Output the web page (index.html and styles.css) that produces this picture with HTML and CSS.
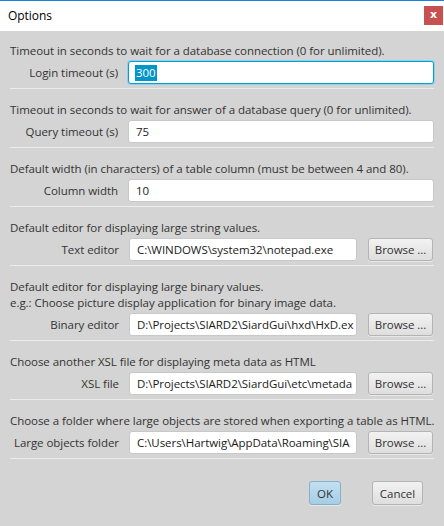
FILE: index.html
```html
<!DOCTYPE html>
<html>
<head>
<meta charset="utf-8">
<title>Options</title>
<link rel="stylesheet" href="styles.css">
</head>
<body>
<div class="window">
  <div class="titlebar">
    <span class="title">Options</span>
    <span class="close">x</span>
  </div>
  <div class="content">
    <section class="group first">
      <p class="desc">Timeout in seconds to wait for a database connection (0 for unlimited).</p>
      <div class="row">
        <span class="label">Login timeout (s)</span>
        <div class="field focused"><span class="sel">300</span></div>
      </div>
    </section>
    <section class="group">
      <p class="desc">Timeout in seconds to wait for answer of a database query (0 for unlimited).</p>
      <div class="row">
        <span class="label">Query timeout (s)</span>
        <div class="field">75</div>
      </div>
    </section>
    <section class="group">
      <p class="desc">Default width (in characters) of a table column (must be between 4 and 80).</p>
      <div class="row">
        <span class="label">Column width</span>
        <div class="field">10</div>
      </div>
    </section>
    <section class="group">
      <p class="desc">Default editor for displaying large string values.</p>
      <div class="row browse-row">
        <span class="label">Text editor</span>
        <div class="field">C:\WINDOWS\system32\notepad.exe</div>
        <button class="btn">Browse ...</button>
      </div>
    </section>
    <section class="group">
      <p class="desc">Default editor for displaying large binary values.<br>e.g.: Choose picture display application for binary image data.</p>
      <div class="row browse-row">
        <span class="label">Binary editor</span>
        <div class="field">D:\Projects\SIARD2\SiardGui\hxd\HxD.ex</div>
        <button class="btn">Browse ...</button>
      </div>
    </section>
    <section class="group">
      <p class="desc">Choose another XSL file for displaying meta data as HTML</p>
      <div class="row browse-row">
        <span class="label">XSL file</span>
        <div class="field">D:\Projects\SIARD2\SiardGui\etc\metada</div>
        <button class="btn">Browse ...</button>
      </div>
    </section>
    <section class="group">
      <p class="desc">Choose a folder where large objects are stored when exporting a table as HTML.</p>
      <div class="row browse-row">
        <span class="label">Large objects folder</span>
        <div class="field">C:\Users\Hartwig\AppData\Roaming\SIA</div>
        <button class="btn">Browse ...</button>
      </div>
    </section>
    <div class="actions">
      <button class="btn ok">OK</button>
      <button class="btn cancel">Cancel</button>
    </div>
  </div>
</div>
</body>
</html>
```

FILE: styles.css
```css
* { box-sizing: border-box; }
html, body {
  margin: 0;
  padding: 0;
  width: 444px;
  height: 526px;
  overflow: hidden;
}
body {
  font-family: "Open Sans", "Noto Sans", sans-serif;
  font-size: 11.5px;
  letter-spacing: -0.05px;
  color: #333333;
  background: #d4d4d4;
}
.window {
  width: 444px;
  height: 526px;
  display: flex;
  flex-direction: column;
}
.titlebar {
  height: 31px;
  flex: none;
  background: #ffffff;
  border-top: 1px solid #1883d7;
  display: flex;
  align-items: center;
  justify-content: space-between;
  padding: 0 1px 0 8px;
}
.title {
  color: #000000;
  font-size: 12px;
  margin-top: -1px;
}
.close {
  width: 19px;
  height: 19px;
  background: #c75050;
  color: #ffffff;
  font-weight: bold;
  font-size: 11px;
  line-height: 17px;
  text-align: center;
  font-family: "DejaVu Sans", sans-serif;
  margin-top: -1px;
}
.content {
  flex: 1;
  background: #d4d4d4;
  padding: 0 10px;
  display: flex;
  flex-direction: column;
}
.group {
  padding: 13px 0 4px;
  border-bottom: 1px solid #ececec;
}
.group.first {
  padding-top: 12px;
}
.desc {
  margin: 0;
  line-height: 16px;
  white-space: nowrap;
}
.row {
  display: grid;
  grid-template-columns: 108px 1fr;
  column-gap: 10px;
  margin-top: 2px;
  align-items: center;
}
.row.browse-row {
  grid-template-columns: 108px 1fr 65px;
  column-gap: 11px;
  margin-right: 1px;
}
.row.browse-row .label {
  margin-right: -1px;
}
.label {
  text-align: right;
  white-space: nowrap;
}
.field {
  height: 23px;
  background: #ffffff;
  border: 1px solid #c8c8c8;
  border-radius: 3px;
  padding: 0 7px;
  line-height: 21px;
  white-space: nowrap;
  overflow: hidden;
  color: #1a1a1a;
}
.field.focused {
  border-color: #039ed3;
  box-shadow: 0 0 0 1px #8fd0ea;
}
.sel {
  background: #0096c9;
  color: #ffffff;
  display: inline-block;
  line-height: 16px;
  padding: 0 1px;
  margin-left: -1px;
}
.btn {
  font-family: inherit;
  font-size: 11.5px;
  letter-spacing: -0.05px;
  color: #333333;
  height: 23px;
  border: 1px solid #b4b4b4;
  border-radius: 3px;
  background: linear-gradient(#f2f2f2, #dedede);
  padding: 0;
  line-height: 21px;
  box-shadow: 0 1px 0 #e8e8e8;
}
.actions {
  display: flex;
  justify-content: flex-end;
  gap: 31px;
  margin-top: 22px;
  padding-right: 11px;
}
.actions .btn {
  height: 24px;
}
.ok {
  width: 32px;
  background: linear-gradient(#c3e0f1, #a5cde4);
  border-color: #86b0cc;
}
.cancel {
  width: 51px;
}
```
